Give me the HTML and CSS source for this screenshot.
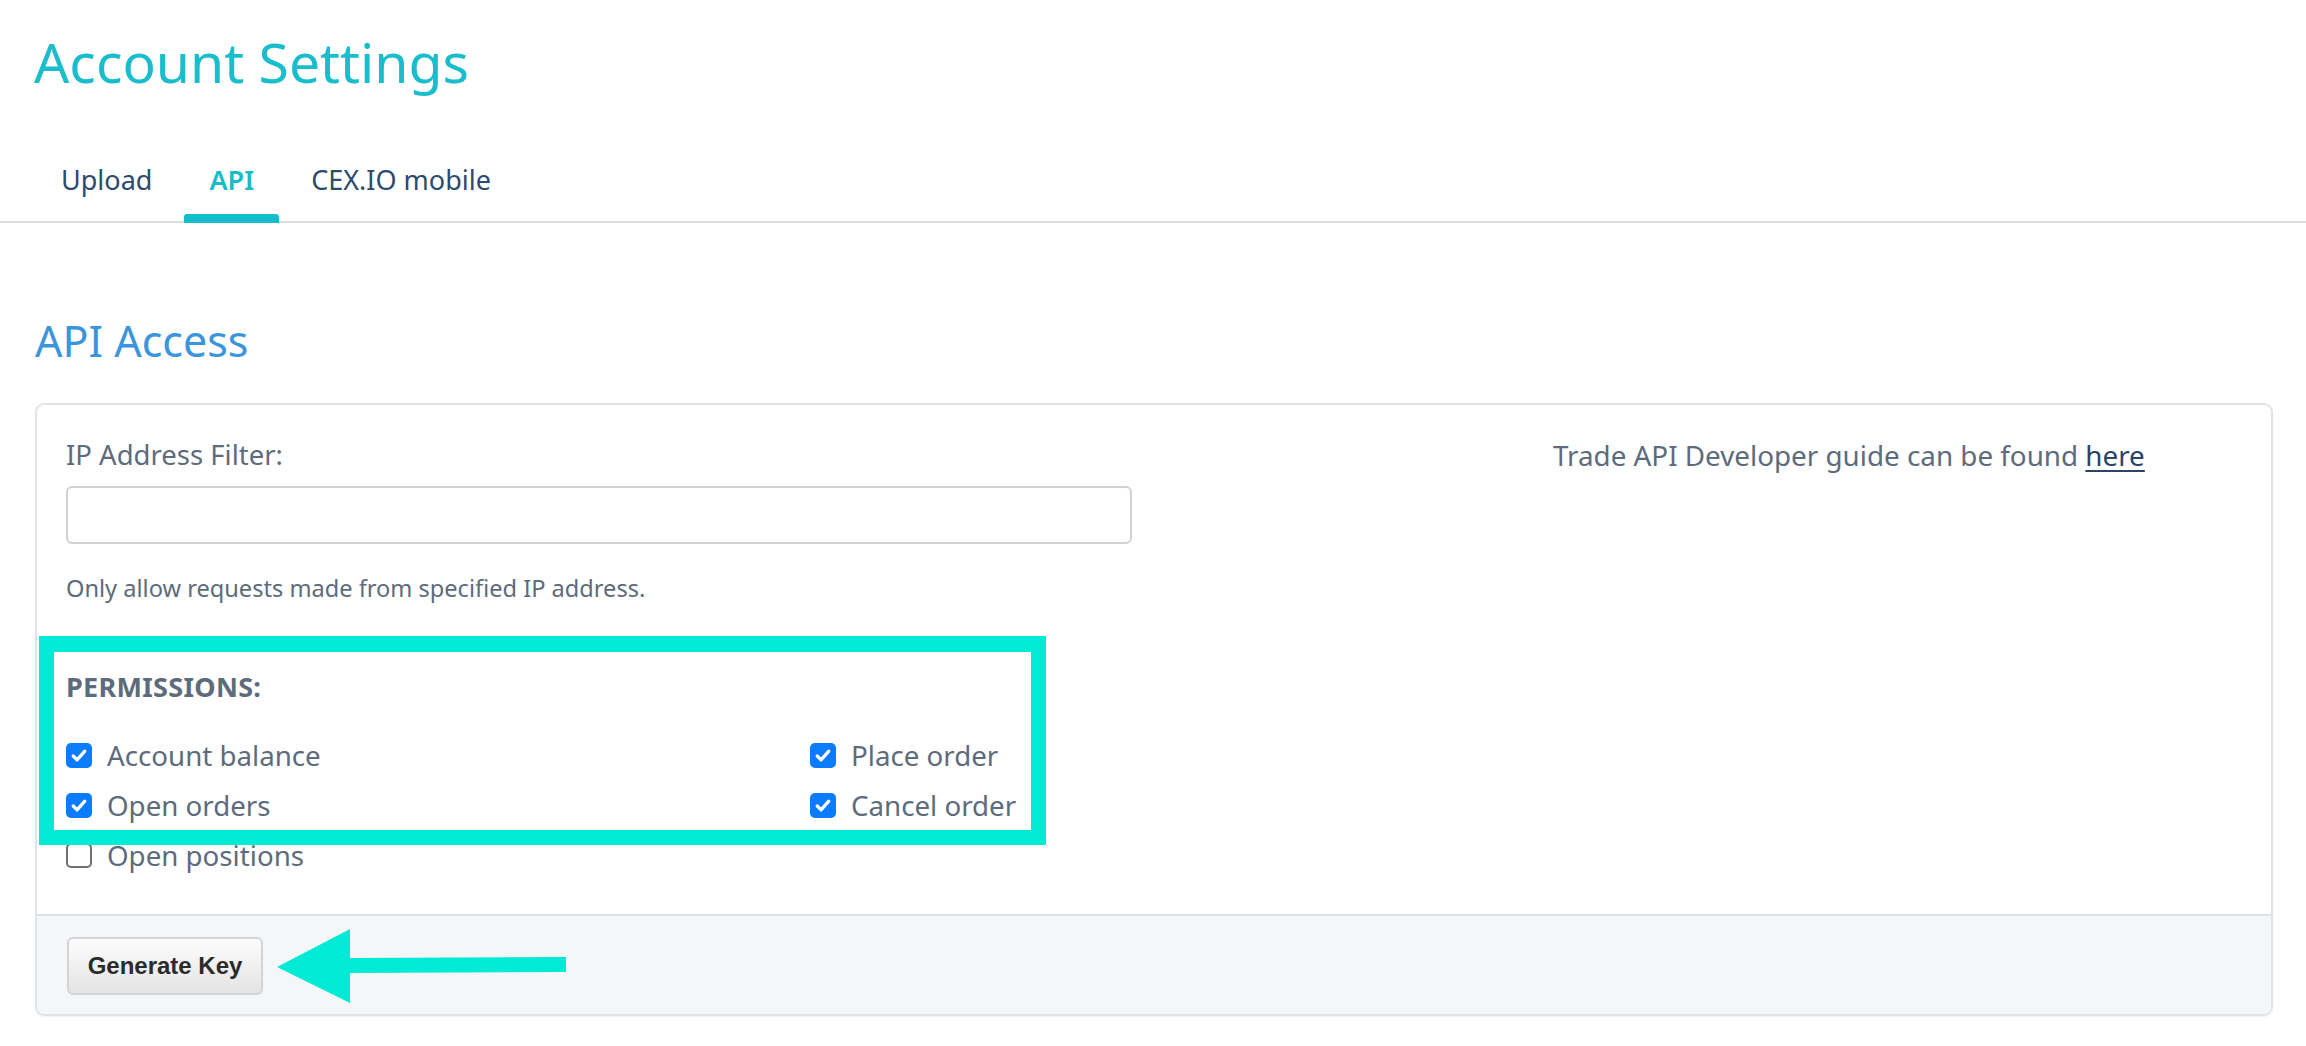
FILE: index.html
```html
<!DOCTYPE html>
<html lang="en">
<head>
<meta charset="utf-8">
<title>Account Settings</title>
<link rel="stylesheet" href="styles.css">
</head>
<body>
<header class="page-head">
  <h1 class="title">Account Settings</h1>
</header>
<nav class="tabs">
  <a class="tab">Upload</a>
  <a class="tab active">API</a>
  <a class="tab">CEX.IO mobile</a>
</nav>
<main class="content">
  <h2 class="section-title">API Access</h2>
  <section class="card">
    <div class="card-body">
      <div class="form-col">
        <label class="field-label">IP Address Filter:</label>
        <input class="text-input" type="text">
        <p class="help">Only allow requests made from specified IP address.</p>
        <h3 class="perm-title">PERMISSIONS:</h3>
        <div class="perm-grid">
          <div class="perm"><span class="box on"><svg viewBox="0 0 26 26"><path d="M7 13.5 L11 17.5 L19 8.5"/></svg></span>Account balance</div>
          <div class="perm"><span class="box on"><svg viewBox="0 0 26 26"><path d="M7 13.5 L11 17.5 L19 8.5"/></svg></span>Place order</div>
          <div class="perm"><span class="box on"><svg viewBox="0 0 26 26"><path d="M7 13.5 L11 17.5 L19 8.5"/></svg></span>Open orders</div>
          <div class="perm"><span class="box on"><svg viewBox="0 0 26 26"><path d="M7 13.5 L11 17.5 L19 8.5"/></svg></span>Cancel order</div>
          <div class="perm"><span class="box"></span>Open positions</div>
        </div>
      </div>
      <div class="guide">Trade API Developer guide can be found <a class="link">here</a></div>
    </div>
    <div class="card-footer">
      <button class="btn">Generate Key</button>
    </div>
  </section>
</main>
<div class="highlight"></div>
<svg class="arrow" viewBox="0 0 300 85" width="300" height="85"><polygon points="7,42 80,4 80,33 296,32 296,47 80,48 80,78"/></svg>
</body>
</html>
```
FILE: styles.css
```css
html, body {
  margin: 0;
  padding: 0;
  background: #ffffff;
}
body {
  font-family: "Noto Sans", "Open Sans", sans-serif;
  color: #5d6b7d;
  width: 2306px;
  min-height: 1046px;
  position: relative;
}
.page-head {
  padding: 27px 0 0 34px;
}
.title {
  margin: 0;
  font-size: 55.3px;
  line-height: 70px;
  font-weight: 400;
  color: #19bdcb;
}
.tabs {
  display: flex;
  gap: 7px;
  padding-left: 36px;
  margin-top: 64px;
  border-bottom: 2px solid #dcdde0;
}
.tab {
  position: relative;
  padding: 3px 25px 25px;
  font-size: 27px;
  line-height: 32px;
  color: #2c4b6e;
}
.tab.active {
  color: #17bcca;
  font-weight: 600;
}
.tab.active::after {
  content: "";
  position: absolute;
  left: 0;
  right: 0;
  bottom: -2px;
  height: 9px;
  background: #14bdca;
  border-radius: 3px 3px 0 0;
}
.content {
  padding: 0 33px 0 35px;
}
.section-title {
  margin: 92px 0 0;
  font-size: 43px;
  line-height: 52px;
  font-weight: 400;
  color: #3b95dc;
}
.card {
  margin-top: 36px;
  border: 2px solid #e0e4e9;
  border-radius: 9px;
  overflow: hidden;
  box-shadow: 0 1px 2px rgba(0, 0, 0, 0.06);
}
.card-body {
  display: grid;
  grid-template-columns: 1487px 1fr;
  padding: 32px 30px 41px 29px;
}
.form-col {
  display: flex;
  flex-direction: column;
  align-items: flex-start;
}
.field-label {
  font-size: 27.5px;
  line-height: 36px;
}
.text-input {
  margin-top: 13px;
  width: 1066px;
  height: 58px;
  box-sizing: border-box;
  border: 2px solid #cfd1d4;
  border-radius: 6px;
  background: #fff;
  padding: 0 14px;
  font: inherit;
}
.help {
  margin: 29px 0 0;
  font-size: 23.6px;
  line-height: 30px;
}
.perm-title {
  margin: 68px 0 0;
  font-size: 27px;
  line-height: 32px;
  font-weight: 700;
  letter-spacing: 0.3px;
  color: #5d6b7d;
}
.perm-grid {
  margin-top: 34px;
  display: grid;
  grid-template-columns: 744px auto;
  row-gap: 14px;
}
.perm {
  display: flex;
  align-items: center;
  gap: 15px;
  font-size: 27.7px;
  line-height: 36px;
  white-space: nowrap;
}
.box {
  width: 26px;
  height: 25px;
  box-sizing: border-box;
  border: 2px solid #6e6f72;
  border-radius: 5px;
  flex: none;
}
.box.on {
  border: none;
  background: #0b7bff;
  display: flex;
}
.box svg {
  width: 26px;
  height: 25px;
}
.box svg path {
  fill: none;
  stroke: #fff;
  stroke-width: 3.4;
  stroke-linecap: round;
  stroke-linejoin: round;
}
.guide {
  font-size: 27.8px;
  line-height: 36px;
  white-space: nowrap;
}
.link {
  color: #2a4467;
  text-decoration: underline;
  text-underline-offset: 4px;
}
.card-footer {
  border-top: 2px solid #dfe2e7;
  background: #f5f6f8;
  padding: 21px 30px 19px;
}
.btn {
  display: block;
  width: 196px;
  height: 58px;
  border: 2px solid #d3d4d6;
  border-radius: 6px;
  background: linear-gradient(#fdfdfd, #e3e3e3);
  font-family: "Liberation Sans", Arial, sans-serif;
  font-weight: 700;
  font-size: 24px;
  color: #2b2b2b;
  padding: 0;
}
.highlight {
  position: absolute;
  left: 39px;
  top: 636px;
  width: 1007px;
  height: 209px;
  box-sizing: border-box;
  border: 15px solid #00ead6;
  border-top-width: 16px;
}
.arrow {
  position: absolute;
  left: 270px;
  top: 925px;
}
.arrow polygon {
  fill: #00ead6;
}
```
